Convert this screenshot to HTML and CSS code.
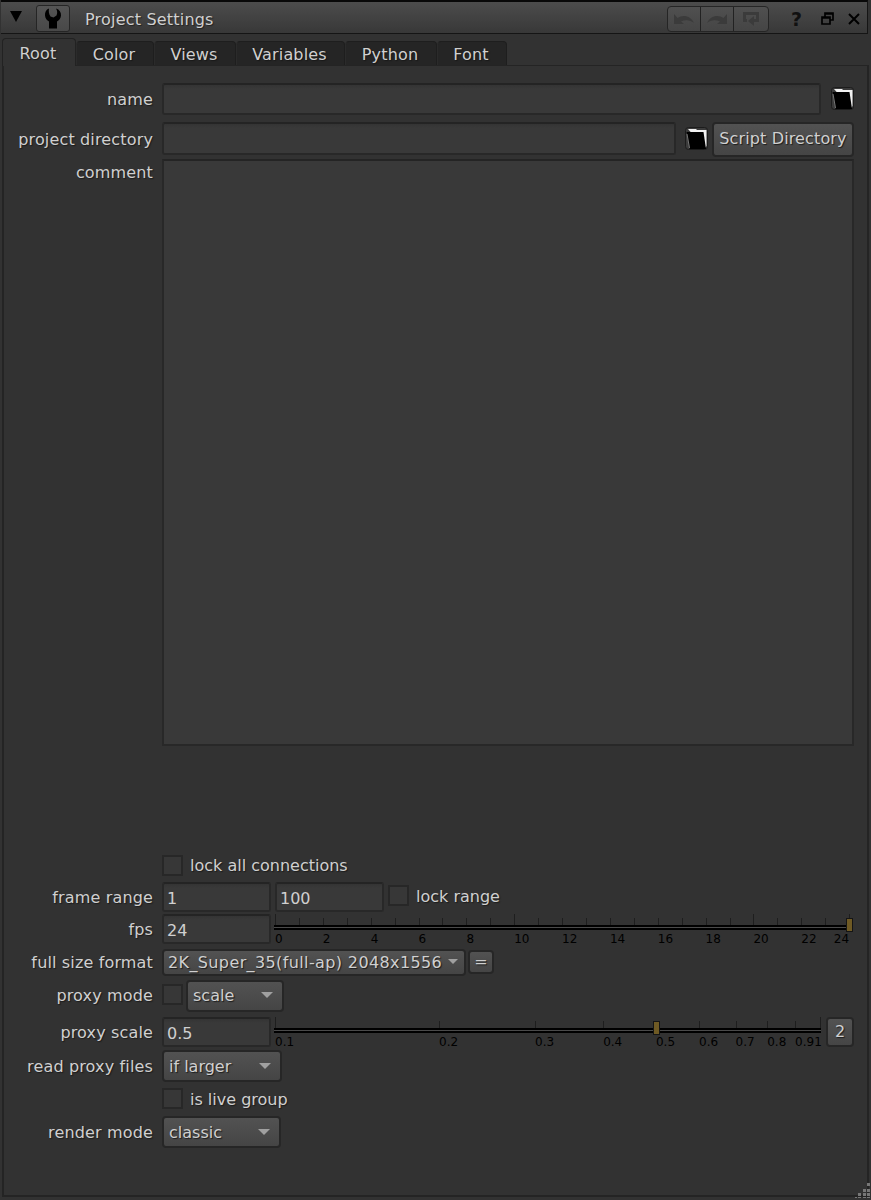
FILE: index.html
```html
<!DOCTYPE html>
<html lang="en">
<head>
<meta charset="UTF-8" />
<title>Project Settings</title>
<meta name="viewport" content="width=device-width, initial-scale=1" />
<link rel="stylesheet" href="styles.css">
</head>
<body>

<header class="titlebar">
  <svg class="collapse" width="12" height="12" viewBox="0 0 12 12"><path d="M0 0h12L6 11z"/></svg>
  <button class="tool" type="button">
    <svg width="18" height="21" viewBox="0 0 18 21"><path d="M5 0.500C2 1.500 0.800 4.500 1 7.500C1.200 10.500 3 12.500 5 13.500V20.500h8v-7C15 12.500 16.800 10.500 17 7.500C17.200 4.500 15.500 1.500 12 0.500C13.500 3 13.500 5 12.500 7.500L9.500 9.500L6.500 8.500C4.800 6 4.500 3 5 0.500z"/></svg>
  </button>
  <h1>Project Settings</h1>
  <div class="history">
    <button type="button" disabled><svg width="22" height="12" viewBox="0 0 22 12"><path d="M1 1v10h10L8 8.500C12 6.500 17 6.500 21 10C18 3 10 1 4.500 5z"/></svg></button>
    <button type="button" disabled><svg width="22" height="12" viewBox="0 0 22 12"><path d="M21 1v10H11l3-2.500C10 6.500 5 6.500 1 10C4 3 12 1 17.500 5z"/></svg></button>
    <button type="button" disabled><svg width="18" height="16" viewBox="0 0 18 16"><path d="M5 9.500H2.500V2.500h13v7H11" fill="none" stroke="#3b3b3b" stroke-width="3"/><path d="M12 5v10L6 10z"/></svg></button>
  </div>
  <div class="window-icons">
    <span class="help">?</span>
    <svg width="13" height="13" viewBox="0 0 13 13"><path d="M4 4.500V1h8v7H9M4 2h8M1 5h8v7H1zM1 6h8" fill="none" stroke="#000" stroke-width="1.700"/></svg>
    <svg width="12" height="12" viewBox="0 0 12 12"><path d="M1 1l10 10M11 1L1 11" fill="none" stroke="#000" stroke-width="2"/></svg>
  </div>
</header>

<nav class="tabs">
  <a class="tab active">Root</a>
  <a class="tab color">Color</a>
  <a class="tab views">Views</a>
  <a class="tab variables">Variables</a>
  <a class="tab python">Python</a>
  <a class="tab font">Font</a>
</nav>

<main class="panel">
  <div class="row name">
    <label>name</label>
    <div class="field grow"></div>
    <svg class="folder" width="23" height="23" viewBox="0 0 23 23"><rect x=".5" y=".5" width="22" height="22" rx="3" fill="#3b3b3b" stroke="#1c1c1c"/><path d="M3 2h8l1 1h9.500v16L20 21z" fill="#f2f2f2"/><path d="M1.500 5H18.500L21 22H4.500z"/><path d="M2 7l2.500 14" stroke="#777"/></svg>
  </div>

  <div class="row directory">
    <label>project directory</label>
    <div class="field grow"></div>
    <svg class="folder" width="23" height="23" viewBox="0 0 23 23"><rect x=".5" y=".5" width="22" height="22" rx="3" fill="#3b3b3b" stroke="#1c1c1c"/><path d="M3 2h8l1 1h9.500v16L20 21z" fill="#f2f2f2"/><path d="M1.500 5H18.500L21 22H4.500z"/><path d="M2 7l2.500 14" stroke="#777"/></svg>
    <button class="btn script-dir" type="button">Script Directory</button>
  </div>

  <div class="row comment">
    <label>comment</label>
    <div class="field grow"></div>
  </div>

  <div class="row lock">
    <label></label>
    <span class="check"></span>
    <span class="check-label">lock all connections</span>
  </div>

  <div class="row range">
    <label>frame range</label>
    <div class="field num">1</div>
    <div class="field num second">100</div>
    <span class="check"></span>
    <span class="check-label">lock range</span>
  </div>

  <div class="row fps">
    <label>fps</label>
    <div class="field num">24</div>
    <div class="slider" id="fps-slider"></div>
  </div>

  <div class="row format">
    <label>full size format</label>
    <button class="btn select full" type="button">2K_Super_35(full-ap) 2048x1556</button>
    <button class="btn equals" type="button">=</button>
  </div>

  <div class="row proxy-mode">
    <label>proxy mode</label>
    <span class="check"></span>
    <button class="btn select scale" type="button">scale</button>
  </div>

  <div class="row proxy-scale">
    <label>proxy scale</label>
    <div class="field num">0.5</div>
    <div class="slider" id="scale-slider"></div>
    <button class="btn two" type="button">2</button>
  </div>

  <div class="row read">
    <label>read proxy files</label>
    <button class="btn select larger" type="button">if larger</button>
  </div>

  <div class="row live">
    <label></label>
    <span class="check"></span>
    <span class="check-label">is live group</span>
  </div>

  <div class="row render">
    <label>render mode</label>
    <button class="btn select classic" type="button">classic</button>
  </div>
</main>

<svg class="grip" width="15" height="15" viewBox="0 0 15 15"><path d="M12 0h3v3h-3zM8 6h3v3H8zM12 6h3v3h-3zM3 10h3v3H3zM8 10h3v3H8zM12 10h3v3h-3zM0 14h2v1H0zM3 14h3v1H3zM8 14h3v1H8zM12 14h3v1h-3z"/></svg>

<script>
  // Each segment owns the tick on its left edge, the last tick closes the scale
  function buildSlider(id, values, pos, isMajor, hasLabel, current) {
    const slider = document.getElementById(id);
    const scale = document.createElement('div');
    scale.className = 'scale-marks';
    values.forEach((v, i) => {
      const seg = document.createElement('div');
      const last = i === values.length - 1;
      seg.className = 'seg' + (isMajor(v) ? ' major' : '') + (last ? ' last' : '');
      seg.style.flexGrow = last ? 0 : pos(values[i + 1]) - pos(v);
      if (hasLabel(v)) {
        const text = document.createElement('span');
        text.textContent = v;
        seg.appendChild(text);
      }
      scale.appendChild(seg);
    });
    const thumb = document.createElement('i');
    thumb.className = 'thumb';
    thumb.style.left = pos(current) + '%';
    scale.appendChild(thumb);
    slider.appendChild(scale);
  }

  const frames = Array.from({ length: 25 }, (_, i) => i);
  buildSlider('fps-slider', frames, v => v / 24 * 100, v => v % 10 === 0 || v === 24, v => v % 2 === 0, 24);

  const scales = [0.1, 0.2, 0.3, 0.4, 0.5, 0.6, 0.7, 0.8, 0.9, 1];
  buildSlider('scale-slider', scales, v => (Math.log10(v) + 1) * 100, v => v === 0.1 || v === 1, () => true, 0.5);
</script>

</body>
</html>
```

FILE: styles.css
```css
:root {
  --bg: #323232;
  --field: #393939;
  --line: #242424;
  --text: #d0d0d0;
}
* {
  box-sizing: border-box;
}
body {
  margin: 0;
  height: 1200px;
  padding: 0 2px 3px;
  background: var(--bg);
  color: var(--text);
  font-family: "DejaVu Sans", Verdana, sans-serif;
  font-size: 16px;
  line-height: 20px;
  display: flex;
  flex-direction: column;
  position: relative;
  overflow: hidden;
}
button {
  font: inherit;
  color: inherit;
  padding: 0;
  margin: 0;
}
svg {
  display: block;
  flex-shrink: 0;
}

/* title bar */
.titlebar {
  display: flex;
  align-items: center;
  height: 34px;
  flex-shrink: 0;
  margin: 0 1px 0 -1px;
  padding: 2px 5px 0 9px;
  border-top: 2px solid #080808;
  border-bottom: 1px solid #151515;
  border-right: 1px solid #151515;
  background: linear-gradient(#4c4c4c, #383838);
}
.collapse {
  margin-top: -3px;
}
.tool {
  width: 34px;
  height: 27px;
  margin-left: 14px;
  display: flex;
  align-items: center;
  justify-content: center;
  border: 1px solid #252525;
  border-radius: 3px;
  background: linear-gradient(#555, #484848);
}
.titlebar h1 {
  margin: 2px 0 0 15px;
  font-size: 16px;
  font-weight: normal;
  letter-spacing: 0.2px;
  text-shadow: 1px 1px 1px #222;
}
.history {
  display: flex;
  margin-left: auto;
  border: 1px solid #252525;
  border-radius: 4px;
  background: linear-gradient(#505050, #454545);
}
.history button {
  width: 33px;
  height: 24px;
  display: flex;
  align-items: center;
  justify-content: center;
  border: 0;
  border-right: 1px solid #222;
  background: none;
}
.history button:last-child {
  width: 34px;
  border-right: 0;
}
.history svg {
  fill: #3b3b3b;
}
.window-icons {
  display: flex;
  align-items: center;
  width: 93px;
  padding-left: 22px;
}
.window-icons svg {
  margin-left: 16px;
}
.window-icons svg:last-child {
  margin-left: 14px;
}
.help {
  width: 14px;
  color: #111;
  font-size: 19px;
  font-weight: bold;
}

/* tabs */
.tabs {
  display: flex;
  align-items: flex-end;
  height: 31px;
  flex-shrink: 0;
}
.tab {
  height: 24px;
  line-height: 25px;
  text-align: center;
  background: #252525;
  border: 1px solid #1e1e1e;
  border-left-color: #2b2b2b;
  border-bottom: 0;
  border-radius: 4px 4px 0 0;
  text-shadow: 1px 1px 1px #181818;
  padding-right: 2px;
  letter-spacing: 0.15px;
}
.tab.active {
  width: 74px;
  height: 28px;
  line-height: 30px;
  margin-bottom: -1px;
  background: var(--bg);
  border-color: #222;
  position: relative;
}
.tab.color { width: 78px; }
.tab.views { width: 82px; }
.tab.variables { width: 109px; }
.tab.python { width: 92px; }
.tab.font { width: 70px; }

/* form */
.panel {
  flex: 1;
  padding: 17px 13px 0 0;
  border: 1px solid var(--line);
  border-width: 1px 2px 2px;
}
.row {
  display: flex;
  align-items: center;
  height: 30px;
  text-shadow: 1px 1px 1px #1c1c1c;
}
label {
  width: 149px;
  flex-shrink: 0;
  margin-right: 9px;
  padding-top: 1px;
  text-align: right;
  letter-spacing: 0.15px;
}
.grow {
  flex: 1;
}
.field {
  align-self: stretch;
  border: 2px solid #282828;
  border-top-color: var(--line);
  border-radius: 3px;
  background: linear-gradient(#343434, var(--field) 4px);
  text-shadow: none;
}
.num {
  width: 109px;
  padding: 5px 0 0 3px;
}
.second {
  margin-left: 4px;
}
.folder {
  margin-left: 9px;
}
.check {
  width: 21px;
  height: 21px;
  border: 2px solid #272727;
  background: #373737;
}
.check-label {
  margin-left: 7px;
}
.btn {
  border: 2px solid #262626;
  border-radius: 4px;
  background: linear-gradient(#525252, #454545);
  text-shadow: 1px 1px 1px #1c1c1c;
  white-space: nowrap;
}
.select {
  display: flex;
  align-items: center;
  justify-content: space-between;
  height: 32px;
  padding: 1px 9px 0 5px;
}
.select::after {
  content: "";
  margin-top: -2px;
  border: 6px solid transparent;
  border-top-color: #a0a0a0;
  border-bottom: 0;
}

.name { height: 32px; }
.name label { padding-top: 2px; }
.name .folder { margin-left: 10px; margin-top: -1px; }
.directory { height: 34px; margin-top: 7px; }
.directory .field { margin-bottom: 1px; }
.directory .folder { margin-top: -1px; }
.script-dir { width: 142px; height: 35px; margin-left: 4px; letter-spacing: 0.13px; }
.comment { height: 587px; margin-top: 3px; align-items: flex-start; }
.comment label { margin-top: 3px; }
.comment .field { border-radius: 0; background: var(--field); }
.lock { height: 31px; margin-top: 104px; }
.range { margin-top: 1px; }
.range label,
.fps label,
.proxy-scale label { padding-top: 2px; }
.range .check { margin: -3px 0 0 4px; }
.range .check-label { margin-top: 0; }
.fps { margin-top: 2px; }
.format { margin-top: 3px; }
.full { width: 304px; height: 27px; padding-right: 6px; padding-left: 4px; letter-spacing: 0.38px; }
.full::after { border-width: 5px; border-bottom: 0; }
.equals { width: 26px; height: 24px; margin: -1px 0 0 2px; line-height: 18px; }
.proxy-mode { height: 33px; margin-top: 2px; }
.proxy-mode .check { margin-top: -3px; }
.scale { width: 98px; margin-left: 3px; }
.proxy-scale { margin-top: 5px; }
.two { width: 28px; height: 30px; margin-left: 4px; }
.read { height: 32px; margin-top: 3px; }
.larger { width: 120px; }
.live { height: 32px; margin-top: 1px; }
.live .check { margin-top: -2px; }
.live .check-label { margin-top: 1px; }
.render { height: 32px; margin-top: 1px; }
.render label { padding-top: 2px; }
.classic { width: 119px; }

/* sliders */
.slider {
  flex: 1;
  align-self: stretch;
  padding: 11px 0 0 1px;
  margin: 0 1px 0 3px;
  background: linear-gradient(#000 2px, #4a4a4a 2px 3px, #000 3px) 0 11px / 100% 5px no-repeat;
  color: #000;
  font-size: 12px;
  line-height: 14px;
  text-shadow: none;
}
.fps .slider {
  padding-right: 3px;
}
.scale-marks {
  display: flex;
  position: relative;
  margin-right: 1px;
}
.seg {
  flex: 1 1 0;
  width: 0;
  padding-top: 7px;
  height: 22px;
  position: relative;
}
.seg::before {
  content: "";
  position: absolute;
  left: 0;
  top: -7px;
  width: 1px;
  height: 7px;
  background: #1e1e1e;
}
.seg.major::before {
  top: -11px;
  height: 11px;
}
.seg span {
  white-space: nowrap;
}
.seg.last {
  display: flex;
  justify-content: flex-end;
}
.proxy-scale .seg.last span {
  margin-right: -2px;
}
.thumb {
  position: absolute;
  top: -7px;
  width: 7px;
  height: 14px;
  margin-left: -3px;
  border: 1px solid #151515;
  background: #6f5a24;
}

.grip {
  position: absolute;
  right: 1px;
  bottom: 2px;
  fill: #777;
}
```
